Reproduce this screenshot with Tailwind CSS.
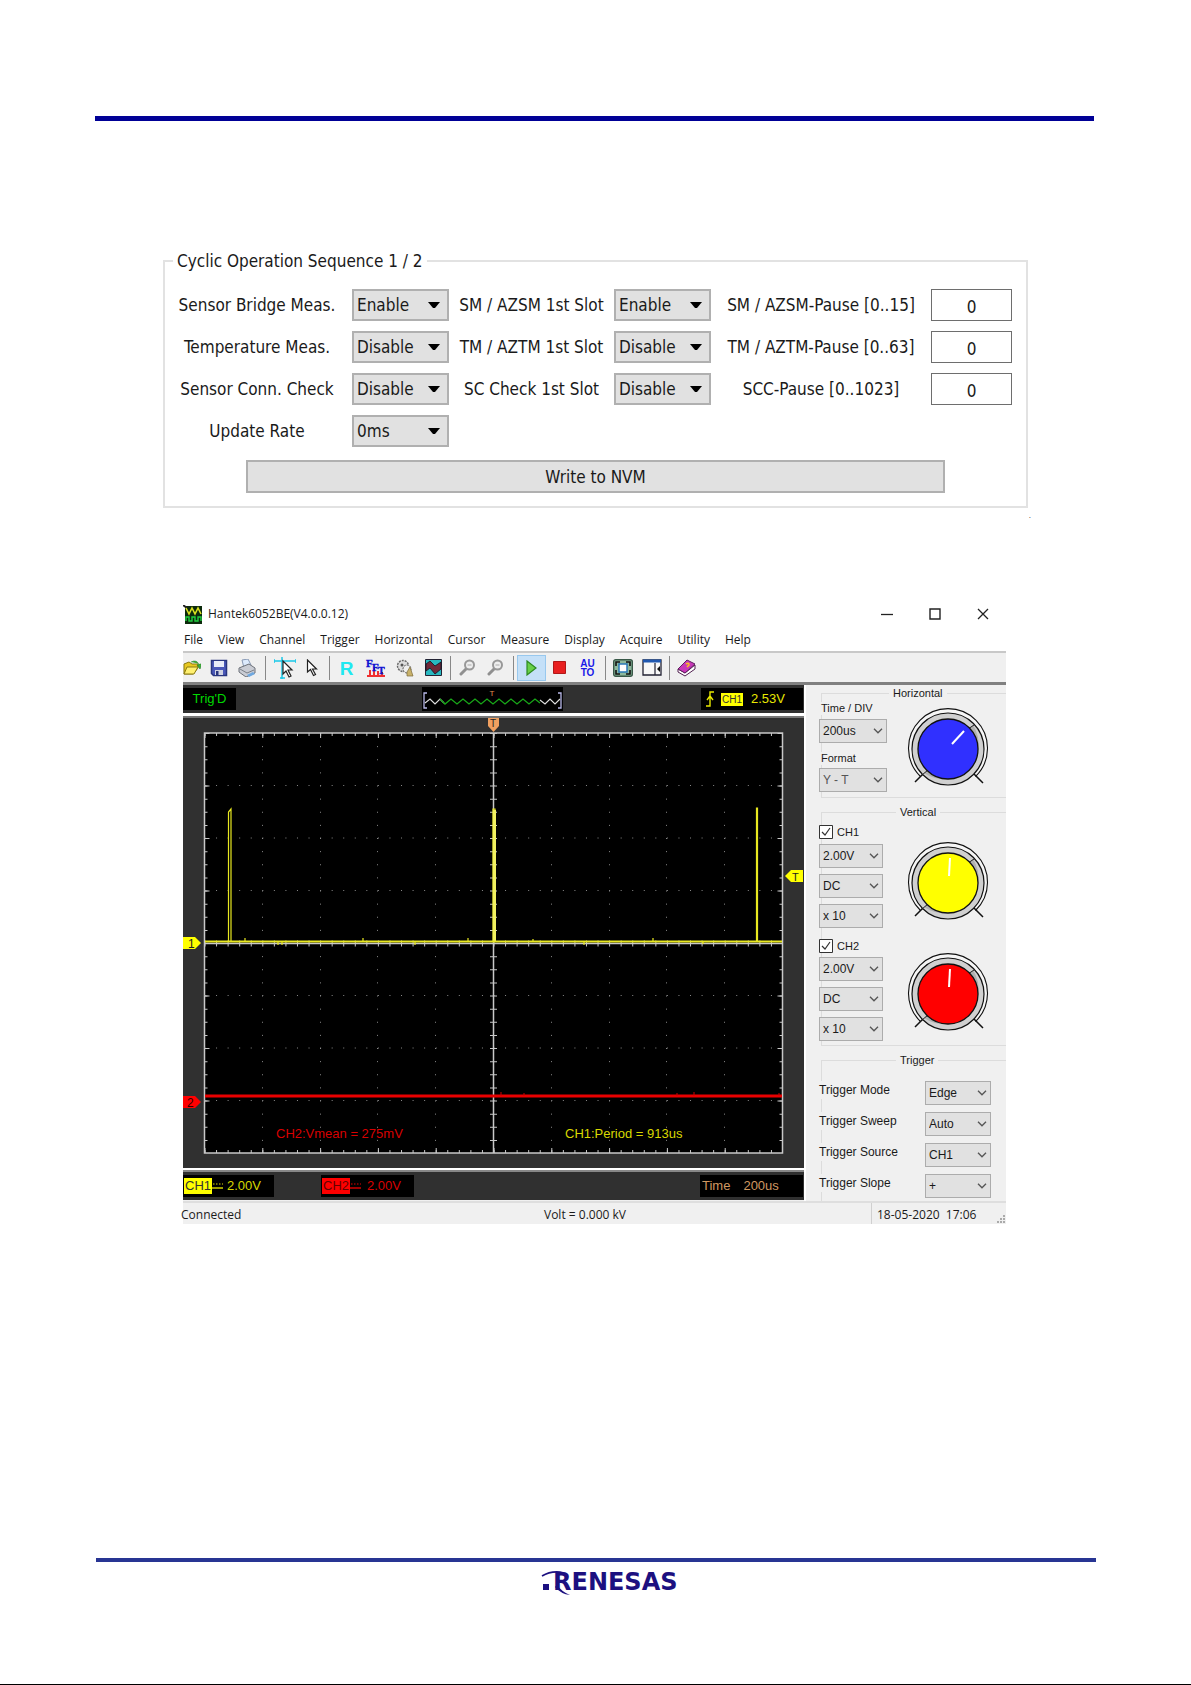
<!DOCTYPE html>
<html lang="en">
<head>
<meta charset="utf-8">
<meta name="viewport" content="width=device-width, initial-scale=1">
<title>Cyclic Operation Sequence</title>
<script src="https://cdn.jsdelivr.net/npm/@tailwindcss/browser@4"></script>
</head>
<body class="flex min-h-screen flex-col border-b border-black bg-white text-[#1a1a1a]">
<svg class="hidden">
  <symbol id="caret" viewBox="0 0 12 7"><path d="M0 0h12L7 6H5z" fill="#000"/></symbol>
  <symbol id="chevron" viewBox="0 0 10 6"><path d="M1 .8l4 4 4-4" fill="none" stroke="#555" stroke-width="1.3"/></symbol>
  <symbol id="knob" viewBox="0 0 84 84">
    <path d="M13.500 68.500A39.500 39.500 0 1 1 68.500 68.500" fill="#f6f6f6" stroke="#111" stroke-width="1.1"/>
    <path d="M8 74l9-9M67 66l9 9" stroke="#111" stroke-width="1.5"/>
    <circle cx="41" cy="41" r="36" fill="#d0d0d0" stroke="#111" stroke-width="1.2"/>
    <path d="M17 65A35 35 0 0 0 66 17z" fill="#b0b0b0"/>
    <path d="M15 67l6-5M61 21l6-4" stroke="#222"/>
    <circle cx="41" cy="41" r="30" fill="currentColor" stroke="#111" stroke-width="1.3"/>
  </symbol>
</svg>

<header class="pt-[116px] pr-[97px] pl-[95px]"><hr class="h-[5px] border-0 bg-[#000096]"></header>

<main class="flex flex-1 flex-col items-center">
  <form class="mt-[129px] w-full max-w-[865px] font-['DejaVu_Sans_Condensed','Noto_Sans',sans-serif] text-[17px] leading-6">
    <fieldset class="border-2 border-[#e2e2e2] pb-[13px]">
      <legend class="ml-[8px] px-[4px] leading-[22px]">Cyclic Operation Sequence 1 / 2</legend>
      <div class="grid grid-cols-[176fr_97fr_165fr_97fr_220fr_81fr] items-center gap-y-[10px] pt-[17px] pr-[14px] pl-[11px] text-center whitespace-nowrap">
        <label for="sb" class="pr-[14px]">Sensor Bridge Meas.</label>
        <span class="relative"><select id="sb" class="block h-8 w-full appearance-none border-2 border-[#b0b0b0] bg-[#e1e1e1] pl-[3px]"><option>Enable</option><option>Disable</option></select><svg class="pointer-events-none absolute top-[13px] right-[9px] h-[7px] w-3"><use href="#caret"/></svg></span>
        <label for="sm">SM / AZSM 1st Slot</label>
        <span class="relative"><select id="sm" class="block h-8 w-full appearance-none border-2 border-[#b0b0b0] bg-[#e1e1e1] pl-[3px]"><option>Enable</option><option>Disable</option></select><svg class="pointer-events-none absolute top-[13px] right-[9px] h-[7px] w-3"><use href="#caret"/></svg></span>
        <label for="smp">SM / AZSM-Pause [0..15]</label>
        <input id="smp" value="0" class="h-8 w-full border border-[#6e6e6e] bg-white pt-1 text-center">

        <label for="tmp" class="pr-[14px]">Temperature Meas.</label>
        <span class="relative"><select id="tmp" class="block h-8 w-full appearance-none border-2 border-[#b0b0b0] bg-[#e1e1e1] pl-[3px]"><option>Disable</option><option>Enable</option></select><svg class="pointer-events-none absolute top-[13px] right-[9px] h-[7px] w-3"><use href="#caret"/></svg></span>
        <label for="tm">TM / AZTM 1st Slot</label>
        <span class="relative"><select id="tm" class="block h-8 w-full appearance-none border-2 border-[#b0b0b0] bg-[#e1e1e1] pl-[3px]"><option>Disable</option><option>Enable</option></select><svg class="pointer-events-none absolute top-[13px] right-[9px] h-[7px] w-3"><use href="#caret"/></svg></span>
        <label for="tmpz">TM / AZTM-Pause [0..63]</label>
        <input id="tmpz" value="0" class="h-8 w-full border border-[#6e6e6e] bg-white pt-1 text-center">

        <label for="scc" class="pr-[14px]">Sensor Conn. Check</label>
        <span class="relative"><select id="scc" class="block h-8 w-full appearance-none border-2 border-[#b0b0b0] bg-[#e1e1e1] pl-[3px]"><option>Disable</option><option>Enable</option></select><svg class="pointer-events-none absolute top-[13px] right-[9px] h-[7px] w-3"><use href="#caret"/></svg></span>
        <label for="scs">SC Check 1st Slot</label>
        <span class="relative"><select id="scs" class="block h-8 w-full appearance-none border-2 border-[#b0b0b0] bg-[#e1e1e1] pl-[3px]"><option>Disable</option><option>Enable</option></select><svg class="pointer-events-none absolute top-[13px] right-[9px] h-[7px] w-3"><use href="#caret"/></svg></span>
        <label for="scp">SCC-Pause [0..1023]</label>
        <input id="scp" value="0" class="h-8 w-full border border-[#6e6e6e] bg-white pt-1 text-center">

        <label for="rate" class="pr-[14px]">Update Rate</label>
        <span class="relative"><select id="rate" class="block h-8 w-full appearance-none border-2 border-[#b0b0b0] bg-[#e1e1e1] pl-[3px]"><option>0ms</option></select><svg class="pointer-events-none absolute top-[13px] right-[9px] h-[7px] w-3"><use href="#caret"/></svg></span>
      </div>
      <div class="mt-[13px] flex px-[81px]"><button type="button" class="h-[33px] w-full border-2 border-[#b0b0b0] bg-[#e1e1e1]">Write to NVM</button></div>
    </fieldset>
  </form>
  <p class="h-4 w-full max-w-[871px] text-right font-['Liberation_Sans',sans-serif] text-[8px] leading-4">.</p>

  <section class="mt-[78px] w-full max-w-[825px] pr-[2px] font-['Open_Sans',sans-serif] text-[12px]">
    <div class="flex h-[24px] items-center">
      <svg class="h-[19px] w-[19px]" viewBox="0 0 19 19"><path d="M2 1h17v18H2z" fill="#0c2a0c"/><path d="M0 0l4 3" stroke="#222" stroke-width="2"/><path d="M3 3l3 6 3-6 3 6 3-6 3 6" fill="none" stroke="#d8e020" stroke-width="1.6"/><path d="M3 16v-4h3v4h3v-4h3v4h3v-4h3v4" fill="none" stroke="#20d040" stroke-width="1.4"/></svg>
      <h1 class="ml-[6px] flex-1 leading-4">Hantek6052BE(V4.0.0.12)</h1>
      <div class="flex gap-[22px] pr-[10px]">
        <button aria-label="Minimize" class="grid h-[24px] w-[26px] place-items-center"><svg class="h-3 w-3" viewBox="0 0 12 12"><path d="M0 6.500h12" stroke="#222" stroke-width="1.3"/></svg></button>
        <button aria-label="Maximize" class="grid h-[24px] w-[26px] place-items-center"><svg class="h-3 w-3" viewBox="0 0 12 12"><path d="M1 1h10v10H1z" fill="none" stroke="#222" stroke-width="1.400"/></svg></button>
        <button aria-label="Close" class="grid h-[24px] w-[26px] place-items-center"><svg class="h-3 w-3" viewBox="0 0 12 12"><path d="M1 1l10 10M11 1L1 11" stroke="#222" stroke-width="1.300"/></svg></button>
      </div>
    </div>
    <nav class="flex h-[25px] items-center gap-[15px] pt-[3px] pl-px leading-4">
      <a href="#">File</a><a href="#">View</a><a href="#">Channel</a><a href="#">Trigger</a><a href="#">Horizontal</a><a href="#">Cursor</a><a href="#">Measure</a><a href="#">Display</a><a href="#">Acquire</a><a href="#">Utility</a><a href="#">Help</a>
    </nav>
    <div class="flex h-[34px] items-center border-t-2 border-b-[3px] border-t-[#c8c8c8] border-b-[#808080] bg-[#f0f0f0]">
      <button aria-label="Open" class="mr-1 grid h-[26px] w-[18px] place-items-center"><svg class="h-[18px] w-[18px]" viewBox="1 0 18 18"><path d="M2 5l5-2 3 2 6 0 0 4-5 6H2z" fill="#e8c820" stroke="#8a7a10"/><path d="M5 8h11l-4 7H2z" fill="#fff070" stroke="#8a7a10"/><path d="M9 3q6-3 8 3l-2 0 3 4 2-5-2 0" fill="#3fae3a" stroke="#27802a" stroke-width=".6"/></svg></button>
      <button aria-label="Save" class="grid h-[26px] w-[28px] place-items-center"><svg class="h-[18px] w-[18px]" viewBox="0 0 18 18"><path d="M1.500 1.500h15v15h-13l-2-2z" fill="#4a58b8" stroke="#28357e" stroke-width="1.500"/><path d="M4 2h10v6H4z" fill="#e8ecf8"/><path d="M5 11h8v5H5z" fill="#cfd3e2"/><path d="M6 12h2.500v4H6z" fill="#28357e"/></svg></button>
      <button aria-label="Print" class="grid h-[26px] w-[28px] place-items-center"><svg class="h-[18px] w-[18px]" viewBox="0 0 18 18"><path d="M4 1l6-1 3 6-7 3z" fill="#dceafc" stroke="#8899b4"/><path d="M1 9l10-4 6 4v5l-9 4-7-5z" fill="#c9ccd4" stroke="#6c7078"/><path d="M2 10l7 4 7-3" fill="none" stroke="#7b8088"/><path d="M9 16l6-3 2 2-6 3z" fill="#6fa8e0"/></svg></button>
      <i class="mr-[5px] ml-[4px] h-6 w-px bg-[#888]"></i>
      <button aria-label="Cursor cross" class="grid h-[26px] w-[28px] place-items-center"><svg class="h-[22px] w-[22px]" viewBox="0 0 22 22"><path d="M0 4h22M8 0v22M0 2v4M22 2v4M6 21h5" stroke="#18c8e8" stroke-width="1.500"/><path d="M9 4v13l3-3 3 6 2-1-3-6h4z" fill="#fff" stroke="#222" stroke-width="1.200"/></svg></button>
      <button aria-label="Pointer" class="grid h-[26px] w-[26px] place-items-center"><svg class="h-[18px] w-[12px]" viewBox="0 0 12 18"><path d="M1.500 1v12l3-2.500 3 6 2-1-3-5.500h4z" fill="#fff" stroke="#222" stroke-width="1.200"/></svg></button>
      <i class="mr-[2px] ml-[4px] h-6 w-px bg-[#888]"></i>
      <button aria-label="Reference" class="grid h-[26px] w-[29px] place-items-center font-['Liberation_Sans',sans-serif] text-[19px] font-bold text-[#20e8f0]">R</button>
      <button aria-label="FFT" class="grid h-[26px] w-[29px] place-items-center"><svg class="h-[20px] w-[20px] overflow-visible font-['Liberation_Serif',serif] font-bold" viewBox="0 0 20 20"><path d="M1 18h18M4 17v-5M8 17V9M12 17v-4M16 17v-3" stroke="#f03030" stroke-width="2"/><g fill="#1010d0" stroke="#1010d0" stroke-width=".4"><text x="0" y="9" font-size="11">F</text><text x="6" y="13" font-size="11">F</text><text x="12" y="16" font-size="10">T</text></g></svg></button>
      <button aria-label="Settings" class="grid h-[26px] w-[29px] place-items-center"><svg class="h-[18px] w-[18px]" viewBox="0 0 18 18"><circle cx="7" cy="7" r="5.500" fill="#ddd" stroke="#666" stroke-width="1.400" stroke-dasharray="2 1"/><circle cx="11" cy="10" r="4" fill="#eee" stroke="#555" stroke-dasharray="2 1"/><circle cx="6" cy="6" r="1.500" fill="#555"/><path d="M11 13l3-5 2 6 1 3h-6z" fill="#c9b26a" stroke="#7b6a3a" stroke-width=".7"/></svg></button>
      <button aria-label="Waveform" class="grid h-[26px] w-[28px] place-items-center"><svg class="h-[17px] w-[17px]" viewBox="0 0 17 17"><path d="M.5.500h16v16H.5z" fill="#28b8c0" stroke="#223"/><path d="M1 5l4-3 5 5 6-4v7l-6 5-5-6-4 3z" fill="#702838" stroke="#112" stroke-width=".8"/></svg></button>
      <i class="mr-[2px] ml-[3px] h-6 w-px bg-[#888]"></i>
      <button aria-label="Zoom in" class="grid h-[26px] w-[28px] place-items-center"><svg class="h-[17px] w-[17px]" viewBox="0 0 17 17"><path d="M7 10l-5 5" stroke="#909090" stroke-width="3" stroke-linecap="round"/><circle cx="10.500" cy="6" r="4.500" fill="#eee" stroke="#989898" stroke-width="2"/><path d="M8.500 6h4" stroke="#aaa"/></svg></button>
      <button aria-label="Zoom out" class="grid h-[26px] w-[29px] place-items-center"><svg class="h-[17px] w-[17px]" viewBox="0 0 17 17"><path d="M7 10l-5 5" stroke="#909090" stroke-width="3" stroke-linecap="round"/><circle cx="10.500" cy="6" r="4.500" fill="#eee" stroke="#989898" stroke-width="2"/><path d="M8.500 6h4" stroke="#aaa"/></svg></button>
      <i class="mr-[3px] ml-[3px] h-6 w-px bg-[#888]"></i>
      <button aria-label="Run" class="grid h-[26px] w-[29px] place-items-center border border-[#98c8ee] bg-[#c4e0f8]"><svg class="h-[16px] w-[11px]" viewBox="0 0 11 16"><path d="M1 1l9 7-9 7z" fill="#68d048" stroke="#2c8a20" stroke-width="1.200"/></svg></button>
      <button aria-label="Stop" class="grid h-[26px] w-[26px] place-items-center"><svg class="h-[13px] w-[13px]" viewBox="0 0 13 13"><path d="M.5.500h12v12H.5z" fill="#e82020" stroke="#b01818"/></svg></button>
      <button aria-label="Auto" class="h-[26px] w-[31px] font-['Liberation_Sans',sans-serif] text-[10px] leading-[9px] font-bold text-[#1818e8]">AU<br>TO</button>
      <i class="mr-[2px] ml-[2px] h-6 w-px bg-[#888]"></i>
      <button aria-label="Full screen" class="grid h-[26px] w-[30px] place-items-center"><svg class="h-[18px] w-[20px]" viewBox="0 0 20 18"><rect x=".7" y=".7" width="18.600" height="16.600" rx="2" fill="#8cb89c" stroke="#385848" stroke-width="1.400"/><path d="M3 7V3h4M13 3h4v4M17 11v4h-4M7 15H3v-4" stroke="#111" stroke-width="1.600" fill="none"/><rect x="6" y="5" width="8" height="8" fill="#fff" stroke="#2878b8" stroke-width="1.500"/></svg></button>
      <button aria-label="Panel" class="grid h-[26px] w-[28px] place-items-center"><svg class="h-[17px] w-[20px]" viewBox="0 0 20 17"><path d="M1 1h18v15H1z" fill="#f8f8f8" stroke="#223" stroke-width="1.300"/><path d="M1 2h18" stroke="#2058b0" stroke-width="3"/><path d="M13 4v12" stroke="#223" stroke-width="1.200"/><path d="M18 7v6l-3-3z" fill="#111"/></svg></button>
      <i class="mr-[2px] ml-[3px] h-6 w-px bg-[#888]"></i>
      <button aria-label="Help book" class="grid h-[26px] w-[28px] place-items-center"><svg class="h-[18px] w-[19px]" viewBox="0 0 19 18"><path d="M1 10l7 4 10-8v4l-10 7-7-4z" fill="#fff" stroke="#502050"/><path d="M1 10l9-9 8 4-10 9z" fill="#c838b8" stroke="#602060"/><path d="M9 5q3-2 3 1l-2 2" fill="none" stroke="#f8c020" stroke-width="1.600"/></svg></button>
    </div>

    <div class="flex bg-[#f0f0f0] font-['Liberation_Sans',sans-serif]">
      <div class="min-w-0 flex-1 pb-px">
        <div class="flex h-[28px] items-center bg-[#303030] pr-px">
          <span class="h-[22px] w-[53px] bg-black text-center text-[13px] leading-[22px] text-[#00d800]">Trig'D</span>
          <svg class="ml-[186px] h-6 w-[141px]" viewBox="0 0 141 24"><path d="M0 0h141v24H0z"/><path d="M5 6H2v15h3M136 6h3v15h-3" fill="none" stroke="#b8b8e8" stroke-width="1.300"/><path d="M3 16l5-4 5 5 5-5 4 4M118 13l5 4 5-5 5 5 5-5" fill="none" stroke="#ddd" stroke-width="1.200"/><path d="M18 12l5 5 6-5 6 5 6-5 6 5 6-5 6 5 6-5 6 5 6-5 6 5 6-5 6 5 6-5 6 5 6-5 5 4" fill="none" stroke="#18a818" stroke-width="1.300"/><text x="67.500" y="9" fill="#e09050" font-size="8">T</text></svg>
          <span class="ml-auto flex h-[22px] w-[102px] items-center bg-black text-[13px] text-[#e8e800]"><svg class="ml-[4px] h-[16px] w-[10px]" viewBox="0 0 10 16"><path d="M1 15h4V1h4M2 9l3-4 3 4" fill="none" stroke="#e8e800" stroke-width="1.400"/></svg><b class="ml-[6px] bg-[#ffff00] px-px text-[10px] leading-[13px] font-normal text-[#333]">CH1</b><span class="ml-[8px]">2.53V</span></span>
        </div>
        <div class="h-[5px] border-b-2 border-b-[#777] bg-white"></div>
        <svg class="block h-auto w-full" viewBox="0 0 621 450">
          <path d="M0 0h621v450H0z" fill="#303030"/>
          <path d="M21.500 15h578v420h-578z" fill="#000" stroke="#c8c8c8" stroke-width="1.500"/>
          <g fill="none" stroke="#8a8a8a">
            <path stroke-dasharray="1 10.560" d="M21.500 67.500h578M21.500 120h578M21.500 172.500h578M21.500 277.500h578M21.500 330h578M21.500 382.500h578"/>
            <path stroke-dasharray="1 12.125" d="M79.500 15v420M137.500 15v420M194.500 15v420M252.500 15v420M368.500 15v420M426.500 15v420M483.500 15v420M541.500 15v420"/>
          </g>
          <g fill="none" stroke="#c8c8c8">
            <path stroke-width="3" stroke-dasharray="1 10.560" d="M21.500 16.500h578M21.500 433.500h578"/>
            <path stroke-width="5" stroke-dasharray="1 56.800" d="M21.500 17.500h578M21.500 432.500h578"/>
            <path stroke-width="3" stroke-dasharray="1 12.125" d="M23 15v420M598 15v420"/>
            <path stroke-width="5" stroke-dasharray="1 51.500" d="M24 15v420M597 15v420"/>
            <path stroke-width="7" stroke-dasharray="1 12.125" d="M310.500 15v420"/>
            <path stroke-width="6" stroke-dasharray="1 10.560" d="M21.500 225.500h578"/>
            <path stroke-width="1.500" d="M310.500 15v420M21.500 225.500h578"/>
          </g>
          <path d="M22 223.500h23.500V94l2.500-3v132.500h262V91h2v132.500h261.500V90h1v133.500H599M62 223v-3M95 224v3M99 224v3M180 223v-3M232 224v3M285 223v-3M350 223v-2M401 224v3M470 223v-3M520 224v2" fill="none" stroke="#e8e820" stroke-width="1.200"/>
          <path d="M311.500 92v131" stroke="#f0f060" stroke-width="3"/>
          <path d="M22 223.500h577" stroke="#e8e820" stroke-width="2"/>
          <path d="M22 378h577" stroke="#e80000" stroke-width="3"/><path d="M318 378v-4M341 378v-3M494 378v-3M511 378v-4M596 378v-3" stroke="#c00"/>
          <path d="M0 219h12l6 6-6 6H0z" fill="#ff0"/><text x="5" y="230" font-size="12" fill="#222">1</text>
          <path d="M0 378h12l6 6-6 6H0z" fill="#f00"/><text x="4" y="389" font-size="12" fill="#300">2</text>
          <path d="M620 152h-12l-6 6 6 6h12z" fill="#ff0"/><text x="609" y="163" font-size="11" fill="#222">T</text>
          <path d="M305 0h11v8l-5.500 6-5.500-6z" fill="#f0a060"/><text x="307" y="9" font-size="10" fill="#222">T</text>
          <text x="93" y="420" font-size="13" fill="#d80000">CH2:Vmean = 275mV</text>
          <text x="382" y="420" font-size="13" fill="#d8d800">CH1:Period = 913us</text>
        </svg>
        <div class="h-1 border-b-2 border-b-[#888] bg-white"></div>
        <div class="flex h-[28px] items-center bg-[#303030] pr-px text-[13px]">
          <span class="flex h-[22px] w-[91px] items-center bg-black text-[#d8d800]"><b class="ml-px bg-[#ffff00] px-px leading-[16px] font-normal text-[#333]">CH1</b><svg class="h-2 w-[11px]" viewBox="0 0 11 8"><path d="M0 6h11" stroke="#e0e000" stroke-width="1.400"/><path d="M1 2h10" stroke="#e0e000" stroke-dasharray="1.500 1.500"/></svg><span class="ml-[4px]">2.00V</span></span>
          <span class="ml-[47px] flex h-[22px] w-[93px] items-center bg-black text-[#d80000]"><b class="ml-px bg-[#ff0000] px-px leading-[16px] font-normal text-[#600]">CH2</b><svg class="h-2 w-[11px]" viewBox="0 0 11 8"><path d="M0 6h11" stroke="#e00000" stroke-width="1.400"/><path d="M1 2h10" stroke="#e00000" stroke-dasharray="1.500 1.500"/></svg><span class="ml-[6px]">2.00V</span></span>
          <span class="ml-auto flex h-[22px] w-[103px] items-center gap-[13px] bg-black pl-[2px] text-[#d09860]"><span>Time</span><span>200us</span></span>
        </div>
      </div>

      <aside class="flex w-[202px] flex-col border-l-2 border-l-white pl-[13px] text-[11px] leading-[13px]">
        <section class="relative mt-[8px] ml-[2px] flex h-[105px] justify-between border-y border-l border-[#dcdcdc]">
          <h2 class="absolute top-[-7px] left-[67px] bg-[#f0f0f0] px-1">Horizontal</h2>
          <div class="mt-[8px] -ml-[3px] flex w-[68px] flex-col">
            <label for="td" class="bg-[#f0f0f0] pl-[2px]">Time / DIV</label>
            <span class="relative mt-[4px] text-[12px]"><select id="td" class="block h-6 w-full appearance-none border border-[#acacac] bg-[#e1e1e1] pl-[3px]"><option>200us</option></select><svg class="pointer-events-none absolute top-[9px] right-[4px] h-[6px] w-[10px]"><use href="#chevron"/></svg></span>
            <label for="fm" class="mt-[9px] bg-[#f0f0f0] pl-[2px]">Format</label>
            <span class="relative mt-[3px] text-[12px]"><select id="fm" class="block h-6 w-full appearance-none border border-[#acacac] bg-[#e1e1e1] pl-[3px] text-[#555]"><option>Y - T</option></select><svg class="pointer-events-none absolute top-[9px] right-[4px] h-[6px] w-[10px]"><use href="#chevron"/></svg></span>
          </div>
          <svg class="mt-[14px] mr-[15px] h-[84px] w-[84px] text-[#3030ff]"><use href="#knob"/><path d="M45 36l12-13" stroke="#fff" stroke-width="2"/></svg>
        </section>

        <section class="relative mt-[14px] ml-[2px] flex h-[234px] justify-between border-y border-l border-[#dcdcdc]">
          <h2 class="absolute top-[-7px] left-[74px] bg-[#f0f0f0] px-1">Vertical</h2>
          <div class="mt-[12px] -ml-[3px] flex w-[64px] flex-col">
            <label class="flex h-[14px] items-center gap-1 bg-[#f0f0f0]"><input type="checkbox" checked class="sr-only"><svg class="h-[14px] w-[14px]" viewBox="0 0 14 14"><path d="M.5.500h13v13H.5z" fill="#fff" stroke="#333"/><path d="M3 7l3 3 5-7" fill="none" stroke="#333" stroke-width="1.200"/></svg>CH1</label>
            <div class="mt-[5px] flex flex-col gap-[6px] text-[12px]">
              <span class="relative"><select aria-label="CH1 volts" class="block h-6 w-full appearance-none border border-[#acacac] bg-[#e1e1e1] pl-[3px]"><option>2.00V</option></select><svg class="pointer-events-none absolute top-[9px] right-[4px] h-[6px] w-[10px]"><use href="#chevron"/></svg></span>
              <span class="relative"><select aria-label="CH1 coupling" class="block h-6 w-full appearance-none border border-[#acacac] bg-[#e1e1e1] pl-[3px]"><option>DC</option></select><svg class="pointer-events-none absolute top-[9px] right-[4px] h-[6px] w-[10px]"><use href="#chevron"/></svg></span>
              <span class="relative"><select aria-label="CH1 probe" class="block h-6 w-full appearance-none border border-[#acacac] bg-[#e1e1e1] pl-[3px]"><option>x 10</option></select><svg class="pointer-events-none absolute top-[9px] right-[4px] h-[6px] w-[10px]"><use href="#chevron"/></svg></span>
            </div>
            <label class="mt-[11px] flex h-[14px] items-center gap-1 bg-[#f0f0f0]"><input type="checkbox" checked class="sr-only"><svg class="h-[14px] w-[14px]" viewBox="0 0 14 14"><path d="M.5.500h13v13H.5z" fill="#fff" stroke="#333"/><path d="M3 7l3 3 5-7" fill="none" stroke="#333" stroke-width="1.200"/></svg>CH2</label>
            <div class="mt-[4px] flex flex-col gap-[6px] text-[12px]">
              <span class="relative"><select aria-label="CH2 volts" class="block h-6 w-full appearance-none border border-[#acacac] bg-[#e1e1e1] pl-[3px]"><option>2.00V</option></select><svg class="pointer-events-none absolute top-[9px] right-[4px] h-[6px] w-[10px]"><use href="#chevron"/></svg></span>
              <span class="relative"><select aria-label="CH2 coupling" class="block h-6 w-full appearance-none border border-[#acacac] bg-[#e1e1e1] pl-[3px]"><option>DC</option></select><svg class="pointer-events-none absolute top-[9px] right-[4px] h-[6px] w-[10px]"><use href="#chevron"/></svg></span>
              <span class="relative"><select aria-label="CH2 probe" class="block h-6 w-full appearance-none border border-[#acacac] bg-[#e1e1e1] pl-[3px]"><option>x 10</option></select><svg class="pointer-events-none absolute top-[9px] right-[4px] h-[6px] w-[10px]"><use href="#chevron"/></svg></span>
            </div>
          </div>
          <div class="mt-[29px] mr-[15px] flex flex-col gap-[27px]">
            <svg class="h-[84px] w-[84px] text-[#ffff00]"><use href="#knob"/><path d="M42 34l1-18" stroke="#fff" stroke-width="2"/></svg>
            <svg class="h-[84px] w-[84px] text-[#ff0000]"><use href="#knob"/><path d="M42 34l1-18" stroke="#fff" stroke-width="2"/></svg>
          </div>
        </section>

        <section class="relative mt-[14px] ml-[2px] flex-1 border-t border-l border-[#dcdcdc]">
          <h2 class="absolute top-[-7px] left-[74px] bg-[#f0f0f0] px-1">Trigger</h2>
          <div class="mt-[20px] mr-[15px] -ml-[3px] flex flex-col gap-[7px] text-[12px]">
            <div class="flex justify-between"><label for="t1" class="h-[18px] bg-[#f0f0f0] pt-[3px]">Trigger Mode</label><span class="relative w-[66px]"><select id="t1" class="block h-6 w-full appearance-none border border-[#acacac] bg-[#e1e1e1] pl-[3px]"><option>Edge</option></select><svg class="pointer-events-none absolute top-[9px] right-[4px] h-[6px] w-[10px]"><use href="#chevron"/></svg></span></div>
            <div class="flex justify-between"><label for="t2" class="h-[18px] bg-[#f0f0f0] pt-[3px]">Trigger Sweep</label><span class="relative w-[66px]"><select id="t2" class="block h-6 w-full appearance-none border border-[#acacac] bg-[#e1e1e1] pl-[3px]"><option>Auto</option></select><svg class="pointer-events-none absolute top-[9px] right-[4px] h-[6px] w-[10px]"><use href="#chevron"/></svg></span></div>
            <div class="flex justify-between"><label for="t3" class="h-[18px] bg-[#f0f0f0] pt-[3px]">Trigger Source</label><span class="relative w-[66px]"><select id="t3" class="block h-6 w-full appearance-none border border-[#acacac] bg-[#e1e1e1] pl-[3px]"><option>CH1</option></select><svg class="pointer-events-none absolute top-[9px] right-[4px] h-[6px] w-[10px]"><use href="#chevron"/></svg></span></div>
            <div class="flex justify-between"><label for="t4" class="h-[18px] bg-[#f0f0f0] pt-[3px]">Trigger Slope</label><span class="relative w-[66px]"><select id="t4" class="block h-6 w-full appearance-none border border-[#acacac] bg-[#e1e1e1] pl-[3px]"><option>+</option></select><svg class="pointer-events-none absolute top-[9px] right-[4px] h-[6px] w-[10px]"><use href="#chevron"/></svg></span></div>
          </div>
        </section>
      </aside>
    </div>
    <footer class="flex h-[23px] border-t-2 border-[#dedede] bg-[#f0f0f0] leading-[23px] whitespace-pre">
      <span class="-ml-[2px] w-[363px]">Connected</span><span class="flex-1">Volt = 0.000 kV</span>
      <span class="w-[135px] border-l border-[#d0d0d0] pl-[5px]">18-05-2020  17:06</span>
      <svg class="-ml-[10px] h-[10px] w-[10px] self-end" viewBox="0 0 10 10"><path d="M7 1h2v2H7zM4 4h2v2H4zM7 4h2v2H7zM1 7h2v2H1zM4 7h2v2H4zM7 7h2v2H7z" fill="#aaa"/></svg>
    </footer>
  </section>
</main>

<footer class="flex flex-col items-center pr-[95px] pb-[82px] pl-[96px]">
  <hr class="h-[4px] w-full border-0 bg-[#283593]">
  <svg role="img" aria-label="Renesas" class="mt-[8px] ml-[32px] h-[32px] w-[144px] overflow-visible font-['DejaVu_Sans',sans-serif] font-bold" viewBox="0 0 144 32"><path d="M3 14h6v6H3z" fill="#1c1080"/><path d="M2 6Q10 1 20 2q6 1 7 5" fill="none" stroke="#1c1080" stroke-width="1.600"/><path d="M17 15q5 7 13 10-9-1-15-8z" fill="#1c1080"/><text x="13" y="20" font-size="24" fill="#1c1080">RENESAS</text></svg>
</footer>
</body>
</html>
